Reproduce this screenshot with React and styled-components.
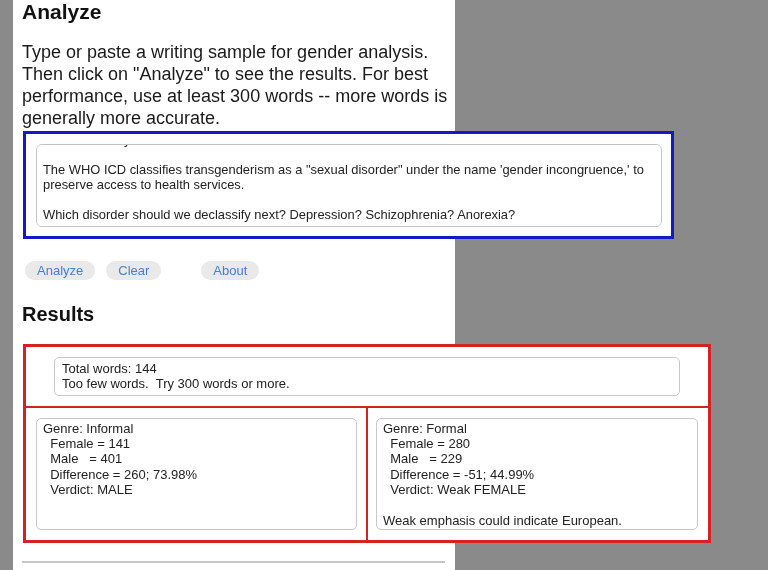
import React, { useEffect, useRef } from 'react';
import styled, { createGlobalStyle } from 'styled-components';

const GlobalStyle = createGlobalStyle`
  html, body {
    margin: 0;
    padding: 0;
    background: #8a8a8a;
    font-family: "Liberation Sans", Arial, sans-serif;
    overflow: hidden;
  }
`;

const sample = `People who want to change their body to match a feeling are treated as patients in every other case, and the doctors say so.

The WHO ICD classifies transgenderism as a "sexual disorder" under the name 'gender incongruence,' to preserve access to health services.

Which disorder should we declassify next? Depression? Schizophrenia? Anorexia?`;

function App() {
  const inputRef = useRef(null);

  useEffect(() => {
    if (inputRef.current) {
      inputRef.current.scrollTop = inputRef.current.scrollHeight;
    }
  }, []);

  return (
    <>
      <GlobalStyle />
      <Page>
        <Heading>Analyze</Heading>
        <Intro>
          Type or paste a writing sample for gender analysis. Then click on
          "Analyze" to see the results. For best performance, use at least 300
          words -- more words is generally more accurate.
        </Intro>
        <InputFrame>
          <SampleInput ref={inputRef} defaultValue={sample} spellCheck={false} />
        </InputFrame>
        <Buttons>
          <Pill>Analyze</Pill>
          <Pill>Clear</Pill>
          <Pill $gap>About</Pill>
        </Buttons>
        <ResultsHeading>Results</ResultsHeading>
        <ResultsGrid>
          <SummaryCell>
            <Summary>
              {'Total words: 144\nToo few words.  Try 300 words or more.'}
            </Summary>
          </SummaryCell>
          <GenreCell $left>
            <GenreBox>
              {'Genre: Informal\n  Female = 141\n  Male   = 401\n  Difference = 260; 73.98%\n  Verdict: MALE'}
            </GenreBox>
          </GenreCell>
          <GenreCell>
            <GenreBox>
              {'Genre: Formal\n  Female = 280\n  Male   = 229\n  Difference = -51; 44.99%\n  Verdict: Weak FEMALE\n\nWeak emphasis could indicate European.'}
            </GenreBox>
          </GenreCell>
        </ResultsGrid>
        <Rule />
      </Page>
    </>
  );
}

export default App;

const Page = styled.div`
  margin-left: 13px;
  width: 424px;
  min-height: 570px;
  padding: 0 9px;
  background: #fff;
  color: #111;
`;

const Heading = styled.h2`
  margin: 0;
  font-size: 21px;
  line-height: 24px;
  font-weight: bold;
`;

const Intro = styled.p`
  width: 428px;
  margin: 18px 0 1px;
  font-size: 18px;
  line-height: 21.9px;
  color: #1a1a1a;
`;

const InputFrame = styled.div`
  width: 626px;
  margin-left: 1px;
  padding: 10px 9px 9px 10px;
  border: 3px solid #1717c4;
  background: #fff;
`;

const SampleInput = styled.textarea`
  display: block;
  box-sizing: border-box;
  width: 626px;
  height: 83px;
  margin: 0;
  padding: 3px 6px 4px;
  border: 1px solid #c4c4c4;
  border-radius: 6px;
  font-family: "Liberation Sans", Arial, sans-serif;
  font-size: 12.9px;
  line-height: 15px;
  color: #222;
  resize: none;
  outline: none;
  scrollbar-width: none;
  &::-webkit-scrollbar {
    display: none;
  }
`;

const Buttons = styled.div`
  display: flex;
  gap: 11px;
  margin: 22px 0 0 3px;
`;

const Pill = styled.button`
  height: 19px;
  padding: 0 12px;
  margin-left: ${(p) => (p.$gap ? '29px' : '0')};
  border: none;
  border-radius: 10px;
  background: #e9e9e9;
  color: #3f82d2;
  font-family: "Liberation Sans", Arial, sans-serif;
  font-size: 13px;
  line-height: 19px;
`;

const ResultsHeading = styled(Heading)`
  margin-top: 22px;
  font-size: 20px;
`;

const ResultsGrid = styled.div`
  display: grid;
  grid-template-columns: 340px 340px;
  gap: 2px;
  width: 682px;
  margin: 18px 0 0 1px;
  border: 3px solid #d42121;
  background: #d42121;
`;

const SummaryCell = styled.div`
  grid-column: 1 / -1;
  padding: 10px 28px;
  background: #fff;
`;

const boxText = `
  border: 1px solid #c8c8c8;
  border-radius: 5px;
  font-size: 13px;
  line-height: 15.4px;
  color: #222;
  white-space: pre-wrap;
`;

const Summary = styled.div`
  ${boxText}
  height: 34px;
  padding: 3px 7px 0;
`;

const GenreCell = styled.div`
  padding: ${(p) => (p.$left ? '10px 9px 10px 10px' : '10px 10px 10px 8px')};
  background: #fff;
`;

const GenreBox = styled.div`
  ${boxText}
  height: 108px;
  padding: 2px 6px 0;
`;

const Rule = styled.hr`
  margin: 18px 0 0;
  border: none;
  border-top: 2px solid #c6c6c6;
  width: 423px;
`;
